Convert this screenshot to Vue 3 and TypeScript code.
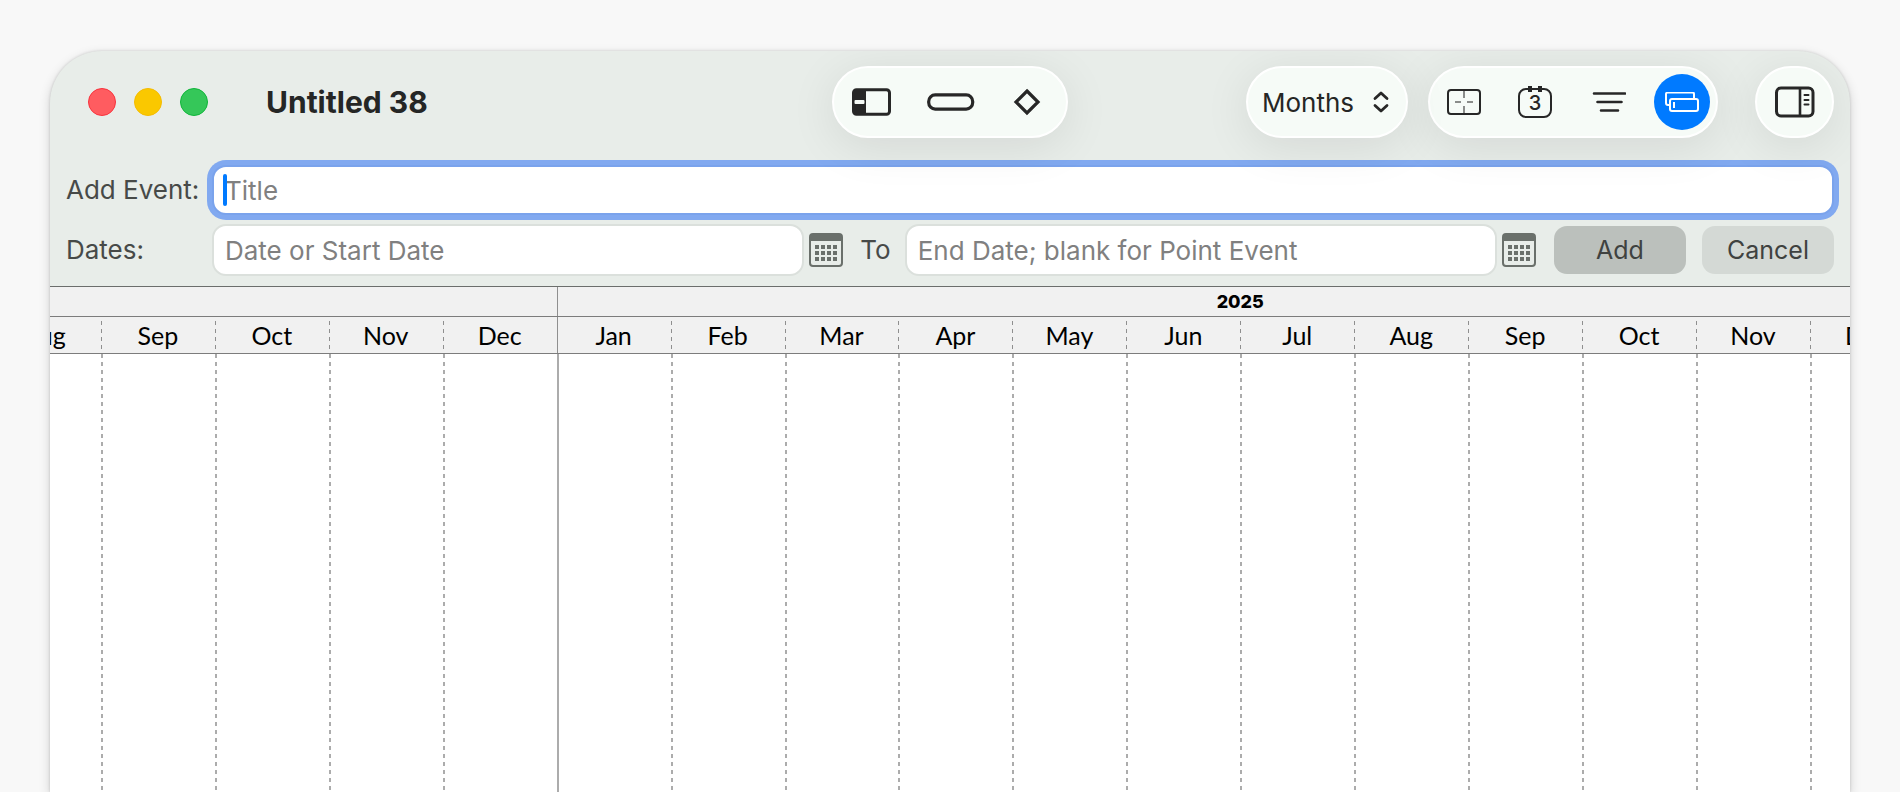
<script setup lang="ts">
import { ref } from 'vue'

interface Year {
  label: string
  months: string[]
}

const allMonths: string[] = ['Jan', 'Feb', 'Mar', 'Apr', 'May', 'Jun', 'Jul', 'Aug', 'Sep', 'Oct', 'Nov', 'Dec']

const years: Year[] = [
  { label: '', months: allMonths.slice(7) },
  { label: '2025', months: allMonths },
]

const scale = ref('Months')
const title = ref('')
const startDate = ref('')
const endDate = ref('')

function clearForm(): void {
  title.value = ''
  startDate.value = ''
  endDate.value = ''
}
</script>

<template>
  <div class="desktop">
    <main class="window">
      <header class="toolbar">
        <div class="lead">
          <div class="lights">
            <button class="light close" type="button" aria-label="Close"></button>
            <button class="light minimize" type="button" aria-label="Minimize"></button>
            <button class="light zoom" type="button" aria-label="Zoom"></button>
          </div>
          <h1 class="doc-title">Untitled 38</h1>
        </div>

        <div class="glass shapes">
          <button class="tool" type="button" aria-label="Section">
            <svg width="39" height="28" viewBox="0 0 39 28">
              <rect x="1.5" y="1.75" width="36" height="24.5" rx="3" fill="none" stroke="#272727" stroke-width="3" />
              <path d="M2 2h12v24H2z" fill="#272727" />
              <rect x="2.5" y="12" width="10" height="4" rx="1" fill="#f6fbf7" />
            </svg>
          </button>
          <button class="tool" type="button" aria-label="Event">
            <svg width="50" height="18" viewBox="0 0 50 18">
              <rect x="1.7" y="1.9" width="44" height="14.2" rx="6.5" fill="none" stroke="#272727" stroke-width="3.2" />
            </svg>
          </button>
          <button class="tool" type="button" aria-label="Point event">
            <svg width="28" height="28" viewBox="0 0 28 28">
              <path d="M14 3 25 14 14 25 3 14z" fill="none" stroke="#272727" stroke-width="3.2" />
            </svg>
          </button>
        </div>

        <div class="trail">
          <div class="glass picker">
            <select v-model="scale" class="scale" aria-label="Timeline scale">
              <option>Days</option>
              <option>Months</option>
              <option>Years</option>
            </select>
            <svg class="chevrons" width="16" height="22" viewBox="0 0 16 22">
              <path d="M2 7.5 8 2l6 5.5M2 14.5 8 20l6-5.5" fill="none" stroke="#272727" stroke-width="2.8" stroke-linecap="round" stroke-linejoin="round" />
            </svg>
          </div>

          <div class="glass views">
            <button class="tool" type="button" aria-label="Fit">
              <svg width="34" height="28" viewBox="0 0 34 28">
                <rect x="1" y="2" width="32" height="24" rx="3" fill="none" stroke="#272727" stroke-width="2" />
                <path d="M17 3v7M17 18v7M8 14h6M20 14h6" fill="none" stroke="#8a8c8a" stroke-width="2" />
              </svg>
            </button>
            <button class="tool" type="button" aria-label="Today">
              <svg width="34" height="34" viewBox="0 0 34 34">
                <rect x="1" y="4" width="32" height="28" rx="7" fill="none" stroke="#272727" stroke-width="2" />
                <path d="M10 1h4v6h-4zM20 1h4v6h-4z" fill="#272727" />
                <text x="17" y="25" text-anchor="middle" class="day">3</text>
              </svg>
            </button>
            <button class="tool" type="button" aria-label="Filter">
              <svg width="37" height="22" viewBox="-4 0 37 22">
                <path d="M1 2.500h31M4.500 11h24M8 19.500h17" fill="none" stroke="#272727" stroke-width="2.600" stroke-linecap="round" />
              </svg>
            </button>
            <button class="tool active" type="button" aria-label="Quick add" aria-pressed="true">
              <svg width="34" height="20" viewBox="0 0 34 20">
                <path d="M4 13H3a2 2 0 0 1-2-2V2a1.500 1.500 0 0 1 1.500-1.500h25A1.500 1.500 0 0 1 29 2v4" fill="none" stroke="#fff" stroke-width="2" />
                <rect x="5" y="7" width="28" height="12" rx="2" fill="none" stroke="#fff" stroke-width="2" />
                <path d="M9 10v6" stroke="#fff" stroke-width="2" />
              </svg>
            </button>
          </div>

          <button class="glass inspector" type="button" aria-label="Inspector">
            <svg width="40" height="32" viewBox="0 0 40 32">
              <rect x="1.5" y="2" width="36.5" height="28" rx="4.5" fill="none" stroke="#272727" stroke-width="3" />
              <path d="M25 2v28" stroke="#272727" stroke-width="2.6" />
              <path d="M29.5 9h4M29.5 14h4M29.5 18.5h4" stroke="#272727" stroke-width="2" stroke-linecap="round" />
            </svg>
          </button>
        </div>
      </header>

      <form class="quick-add" @submit.prevent="clearForm">
        <div class="row">
          <label class="label" for="event-title">Add Event:</label>
          <div class="field focused">
            <input id="event-title" v-model="title" type="text" placeholder="Title" />
            <span class="caret"></span>
          </div>
        </div>
        <div class="row">
          <label class="label" for="start-date">Dates:</label>
          <div class="field">
            <input id="start-date" v-model="startDate" type="text" placeholder="Date or Start Date" />
          </div>
          <button class="calendar" type="button" aria-label="Choose start date">
            <svg width="34" height="34" viewBox="0 0 34 34">
              <rect x="1" y="1" width="32" height="32" rx="3" fill="none" stroke="#6a706b" stroke-width="2" />
              <path d="M1 8V4a3 3 0 0 1 3-3h26a3 3 0 0 1 3 3v4z" fill="#6a706b" />
              <path d="M6 14h23M6 20h23M6 26h23" stroke="#6a706b" stroke-width="4" stroke-dasharray="4 2" />
            </svg>
          </button>
          <label class="to" for="end-date">To</label>
          <div class="field">
            <input id="end-date" v-model="endDate" type="text" placeholder="End Date; blank for Point Event" />
          </div>
          <button class="calendar" type="button" aria-label="Choose end date">
            <svg width="34" height="34" viewBox="0 0 34 34">
              <rect x="1" y="1" width="32" height="32" rx="3" fill="none" stroke="#6a706b" stroke-width="2" />
              <path d="M1 8V4a3 3 0 0 1 3-3h26a3 3 0 0 1 3 3v4z" fill="#6a706b" />
              <path d="M6 14h23M6 20h23M6 26h23" stroke="#6a706b" stroke-width="4" stroke-dasharray="4 2" />
            </svg>
          </button>
          <div class="actions">
            <button class="push primary" type="submit">Add</button>
            <button class="push" type="button" @click="clearForm">Cancel</button>
          </div>
        </div>
      </form>

      <section class="timeline" aria-label="Timeline">
        <div class="track">
          <div v-for="year in years" :key="year.label" class="year" :style="{ flexGrow: year.months.length }">
            <div class="year-label">{{ year.label }}</div>
            <div class="months">
              <div v-for="month in year.months" :key="month" class="month">
                <div class="month-label">{{ month }}</div>
                <div class="lane"></div>
              </div>
            </div>
          </div>
        </div>
      </section>
    </main>
  </div>
</template>

<style>
body {
  margin: 0;
  background: #f8f8f8;
}
</style>

<style scoped>
.desktop {
  box-sizing: border-box;
  display: flex;
  height: 100vh;
  padding: 51px 50px 0;
  overflow: hidden;
  background: #f8f8f8;
  font-family: Inter, "Liberation Sans", sans-serif;
}

.window {
  display: flex;
  flex: 1;
  flex-direction: column;
  min-width: 0;
  overflow: hidden;
  border-radius: 52px 52px 0 0;
  background: #e8ede9;
  box-shadow: 0 0 3px rgba(0, 0, 0, 0.16), 0 4px 12px rgba(0, 0, 0, 0.16);
}

button {
  padding: 0;
  border: 0;
  background: none;
  font: inherit;
  color: inherit;
}

svg {
  display: block;
}

.toolbar {
  position: relative;
  z-index: 1;
  display: grid;
  grid-template-columns: 1fr auto 1fr;
  align-items: center;
  height: 102px;
  padding: 0 16px 0 38px;
}

.lead {
  display: flex;
  align-items: center;
  gap: 58px;
}

.lights {
  display: flex;
  gap: 18px;
}

.light {
  width: 28px;
  height: 28px;
  border: 1px solid;
  border-radius: 50%;
}

.close {
  border-color: #f8333d;
  background: #ff5c60;
}

.minimize {
  border-color: #f4bb00;
  background: #fac800;
}

.zoom {
  border-color: #10b53a;
  background: #35c759;
}

.doc-title {
  margin: 0;
  font-size: 30px;
  font-weight: 700;
  line-height: 36px;
  white-space: nowrap;
  color: #252625;
}

.glass {
  box-sizing: border-box;
  display: flex;
  align-items: center;
  height: 72px;
  border: 2px solid #fff;
  border-radius: 36px;
  background: #f6fbf7;
  box-shadow: 0 8px 48px rgba(0, 0, 0, 0.09);
}

.shapes {
  gap: 36px;
  margin-right: 22px;
  padding: 0 25px 0 18px;
}

.trail {
  display: flex;
  align-items: center;
  justify-content: flex-end;
}

.picker {
  position: relative;
  width: 162px;
  margin-right: 20px;
}

.scale {
  width: 100%;
  height: 100%;
  padding: 0 0 0 14px;
  border: 0;
  border-radius: 36px;
  background: none;
  appearance: none;
  font: inherit;
  font-size: 26px;
  color: #252625;
}

.chevrons {
  position: absolute;
  top: 23px;
  right: 17px;
  pointer-events: none;
}

.views {
  gap: 37px;
  margin-right: 37px;
  padding: 0 6px 0 17px;
}

.active {
  display: grid;
  place-items: center;
  width: 56px;
  height: 56px;
  margin-left: -9px;
  border-radius: 50%;
  background: #007aff;
}

.day {
  font-size: 20px;
  font-weight: 500;
  fill: #272727;
}

.inspector {
  justify-content: center;
  width: 79px;
}

.quick-add {
  display: grid;
  gap: 9px;
  padding: 12px 16px 10px;
  font-size: 26px;
  line-height: 32px;
  color: #474a48;
}

.row {
  display: flex;
  align-items: center;
}

.label {
  flex: none;
  width: 146px;
}

.field {
  position: relative;
  box-sizing: border-box;
  flex: 1;
  min-width: 0;
  height: 52px;
  border: 2px solid #dbe0dc;
  border-radius: 14px;
  background: #fff;
}

.focused {
  height: 50px;
  border-color: #7aa3ec;
  box-shadow: 0 0 0 5px #81a9f0;
}

.field input {
  box-sizing: border-box;
  width: 100%;
  height: 100%;
  padding: 1px 11px 0;
  border: 0;
  outline: 0;
  background: none;
  font: inherit;
  color: #252625;
}

.field input::placeholder {
  color: #808080;
  opacity: 1;
}

.caret {
  position: absolute;
  top: 7px;
  left: 9px;
  width: 4px;
  height: 32px;
  border-radius: 2px;
  background: #007aff;
}

.calendar {
  flex: none;
  margin-left: 5px;
}

.to {
  margin: 0 14px 0 17px;
}

.actions {
  display: flex;
  gap: 16px;
  margin-left: 18px;
}

.push {
  width: 132px;
  height: 48px;
  border-radius: 13px;
  background: #d4d9d5;
  font-size: 25px;
  color: #3f4240;
}

.primary {
  background: #bbc0bc;
}

.timeline {
  display: flex;
  flex: 1;
  min-height: 0;
  overflow: hidden;
  border-top: 1px solid #6b6e6c;
  background: #fff;
}

.track {
  display: flex;
  flex: none;
  width: 107.6%;
  margin-left: -3.5%;
}

.year {
  display: flex;
  flex-basis: 0;
  flex-direction: column;
}

.year-label {
  box-sizing: border-box;
  height: 30px;
  border-bottom: 1px solid #7c7c7c;
  background: #f1f1f1;
  font-size: 18px;
  font-weight: 800;
  line-height: 29px;
  text-align: center;
  color: #000;
}

.months {
  display: flex;
  flex: 1;
}

.month {
  display: flex;
  flex: 1 1 0;
  flex-direction: column;
  min-width: 0;
}

.month-label {
  box-sizing: border-box;
  height: 37px;
  border-bottom: 1px solid #7c7c7c;
  background: linear-gradient(#8f8f8f 50%, transparent 50%) left 4px / 1px 8px repeat-y #f1f1f1;
  font-family: Lato, "Liberation Sans", sans-serif;
  font-size: 25px;
  line-height: 36px;
  text-align: center;
  color: #000;
}

.lane {
  flex: 1;
  background: linear-gradient(#acacac 50%, transparent 50%) left top / 2px 8px repeat-y;
}

/* The turn of the year is a solid rule that runs through every band. */
.year + .year .year-label,
.year + .year .month:first-child .month-label {
  background: linear-gradient(#8f8f8f, #8f8f8f) left top / 1px 100% no-repeat #f1f1f1;
}

.year + .year .month:first-child .lane {
  background: linear-gradient(#acacac, #acacac) left top / 2px 100% no-repeat;
}
</style>
